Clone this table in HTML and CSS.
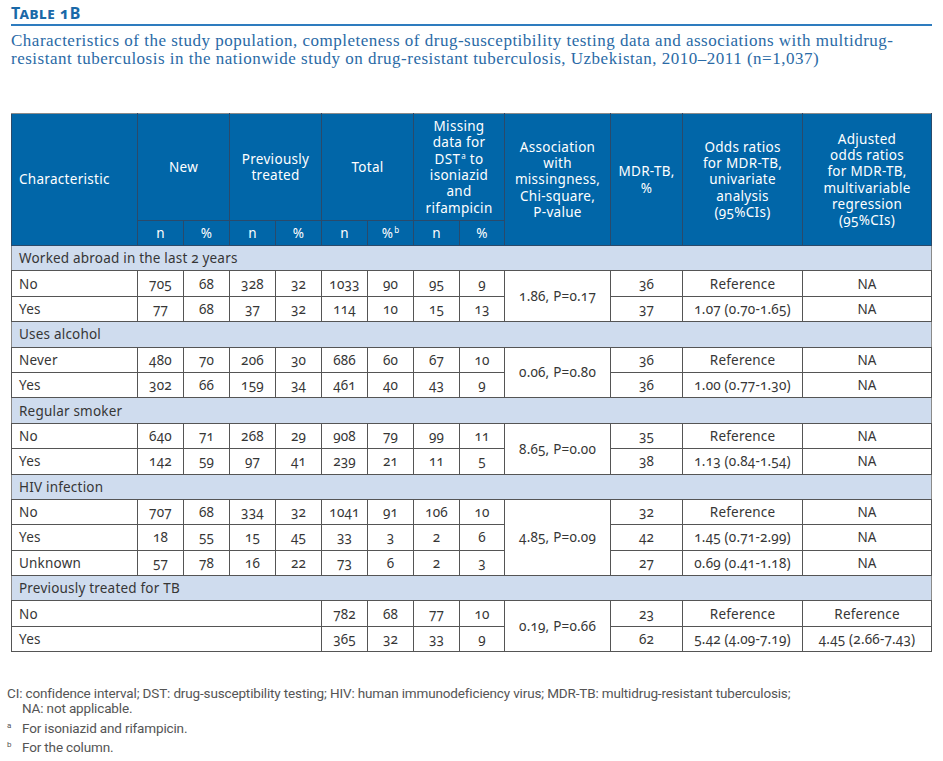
FILE: index.html
```html
<!DOCTYPE html>
<html lang="en">
<head>
<meta charset="utf-8">
<title>Table 1B</title>
<link rel="stylesheet" href="styles.css">
</head>
<body>
<div class="page">
  <div class="title">Table 1B</div>
  <p class="caption">Characteristics of the study population, completeness of drug-susceptibility testing data and associations with multidrug-<br>resistant tuberculosis in the nationwide study on drug-resistant tuberculosis, Uzbekistan, 2010–2011 (n=1,037)</p>
  <table class="data">
    <colgroup>
      <col class="c-char">
      <col class="c-num"><col class="c-num"><col class="c-num"><col class="c-num"><col class="c-num"><col class="c-num"><col class="c-num"><col class="c-num2">
      <col class="c-assoc"><col class="c-mdr"><col class="c-or"><col class="c-aor">
    </colgroup>
    <thead>
      <tr class="h1">
        <th rowspan="2" class="left">Characteristic</th>
        <th colspan="2">New</th>
        <th colspan="2">Previously<br>treated</th>
        <th colspan="2">Total</th>
        <th colspan="2">Missing<br>data for<br>DST<sup>a</sup> to<br>isoniazid<br>and<br>rifampicin</th>
        <th rowspan="2">Association<br>with<br>missingness,<br>Chi-square,<br>P-value</th>
        <th rowspan="2">MDR-TB,<br>%</th>
        <th rowspan="2">Odds ratios<br>for MDR-TB,<br>univariate<br>analysis<br>(95%CIs)</th>
        <th rowspan="2">Adjusted<br>odds ratios<br>for MDR-TB,<br>multivariable<br>regression<br>(95%CIs)</th>
      </tr>
      <tr class="h2">
        <th>n</th><th>%</th><th>n</th><th>%</th><th>n</th><th>%<sup>b</sup></th><th>n</th><th>%</th>
      </tr>
    </thead>
    <tbody>
      <tr class="group"><td colspan="13">Worked abroad in the last 2 years</td></tr>
      <tr><td class="left">No</td><td>705</td><td>68</td><td>328</td><td>32</td><td>1033</td><td>90</td><td>95</td><td>9</td><td rowspan="2">1.86, P=0.17</td><td>36</td><td>Reference</td><td>NA</td></tr>
      <tr><td class="left">Yes</td><td>77</td><td>68</td><td>37</td><td>32</td><td>114</td><td>10</td><td>15</td><td>13</td><td>37</td><td>1.07 (0.70-1.65)</td><td>NA</td></tr>

      <tr class="group"><td colspan="13">Uses alcohol</td></tr>
      <tr><td class="left">Never</td><td>480</td><td>70</td><td>206</td><td>30</td><td>686</td><td>60</td><td>67</td><td>10</td><td rowspan="2">0.06, P=0.80</td><td>36</td><td>Reference</td><td>NA</td></tr>
      <tr><td class="left">Yes</td><td>302</td><td>66</td><td>159</td><td>34</td><td>461</td><td>40</td><td>43</td><td>9</td><td>36</td><td>1.00 (0.77-1.30)</td><td>NA</td></tr>

      <tr class="group"><td colspan="13">Regular smoker</td></tr>
      <tr><td class="left">No</td><td>640</td><td>71</td><td>268</td><td>29</td><td>908</td><td>79</td><td>99</td><td>11</td><td rowspan="2">8.65, P=0.00</td><td>35</td><td>Reference</td><td>NA</td></tr>
      <tr><td class="left">Yes</td><td>142</td><td>59</td><td>97</td><td>41</td><td>239</td><td>21</td><td>11</td><td>5</td><td>38</td><td>1.13 (0.84-1.54)</td><td>NA</td></tr>

      <tr class="group"><td colspan="13">HIV infection</td></tr>
      <tr><td class="left">No</td><td>707</td><td>68</td><td>334</td><td>32</td><td>1041</td><td>91</td><td>106</td><td>10</td><td rowspan="3">4.85, P=0.09</td><td>32</td><td>Reference</td><td>NA</td></tr>
      <tr><td class="left">Yes</td><td>18</td><td>55</td><td>15</td><td>45</td><td>33</td><td>3</td><td>2</td><td>6</td><td>42</td><td>1.45 (0.71-2.99)</td><td>NA</td></tr>
      <tr><td class="left">Unknown</td><td>57</td><td>78</td><td>16</td><td>22</td><td>73</td><td>6</td><td>2</td><td>3</td><td>27</td><td>0.69 (0.41-1.18)</td><td>NA</td></tr>

      <tr class="group"><td colspan="13">Previously treated for TB</td></tr>
      <tr><td class="left" colspan="5">No</td><td>782</td><td>68</td><td>77</td><td>10</td><td rowspan="2">0.19, P=0.66</td><td>23</td><td>Reference</td><td>Reference</td></tr>
      <tr><td class="left" colspan="5">Yes</td><td>365</td><td>32</td><td>33</td><td>9</td><td>62</td><td>5.42 (4.09-7.19)</td><td>4.45 (2.66-7.43)</td></tr>
    </tbody>
  </table>
  <div class="notes">
    <p class="note main">CI: confidence interval; DST: drug-susceptibility testing; HIV: human immunodeficiency virus; MDR-TB: multidrug-resistant tuberculosis;<br>NA: not applicable.</p>
    <p class="note"><span class="mark">a</span>For isoniazid and rifampicin.</p>
    <p class="note"><span class="mark">b</span>For the column.</p>
  </div>
</div>
</body>
</html>
```
FILE: styles.css
```css
html, body {
  margin: 0;
  padding: 0;
  background: #ffffff;
}

.page {
  width: 921px;
  padding: 4px 11px 0 11px;
  font-family: "Noto Sans", "DejaVu Sans", sans-serif;
}

.title {
  font-family: "Noto Sans", sans-serif;
  font-weight: 700;
  font-size: 16px;
  font-variant: small-caps;
  font-variant-numeric: oldstyle-nums;
  letter-spacing: 0.5px;
  color: #1a69a8;
  line-height: 19px;
  padding-bottom: 1px;
  border-bottom: 2px solid #2e7cbf;
}

.caption {
  margin: 6px 0 0 0;
  font-family: "Liberation Serif", serif;
  font-size: 17px;
  line-height: 18px;
  letter-spacing: 0.5px;
  color: #2a6aa6;
}

.data {
  margin-top: 45px;
  width: 921px;
  border-collapse: collapse;
  table-layout: fixed;
  border: 1px solid #8a8a8a;
  font-size: 13.5px;
  color: #363636;
  font-variant-numeric: oldstyle-nums;
}

.c-char { width: 126px; }
.c-num { width: 46px; }
.c-num2 { width: 45px; }
.c-assoc { width: 106px; }
.c-mdr { width: 72px; }
.c-or { width: 120px; }
.c-aor { width: 129px; }

.data th {
  background: #0166a8;
  color: #ffffff;
  font-weight: 400;
  font-size: 13.5px;
  line-height: 16.3px;
  text-align: center;
  vertical-align: middle;
  padding: 0 2px;
  border: 1px solid #2a4a6b;
  letter-spacing: 0.3px;
}

.data thead tr:first-child th {
  border-top: 1px solid #8a8a8a;
}

.data th.left {
  text-align: left;
  padding-left: 7px;
}

.data .h1 { height: 107px; }
.data .h2 { height: 25px; }

.data sup {
  font-size: 8px;
  line-height: 0;
  vertical-align: 5px;
  margin-left: 1px;
}

.data td {
  height: 24.4px;
  padding: 0 2px;
  text-align: center;
  vertical-align: middle;
  border: 1px solid #555555;
  white-space: nowrap;
  letter-spacing: 0.2px;
}

.data td.left {
  text-align: left;
  padding-left: 7px;
}

.data .group td {
  background: #cfdcee;
  text-align: left;
  padding-left: 7px;
  border-left-color: #8a8a8a;
  border-right-color: #8a8a8a;
}

.notes {
  margin: 34px 0 0 -4px;
  font-family: Roboto, "Noto Sans", sans-serif;
  font-size: 13.5px;
  letter-spacing: -0.15px;
  color: #555555;
  line-height: 15px;
}

.note {
  margin: 0 0 4px 0;
  padding-left: 15px;
  position: relative;
}

.note.main {
  text-indent: -15px;
  margin-bottom: 5px;
}

.mark {
  position: absolute;
  left: 0;
  top: -3px;
  font-size: 8px;
}
```
